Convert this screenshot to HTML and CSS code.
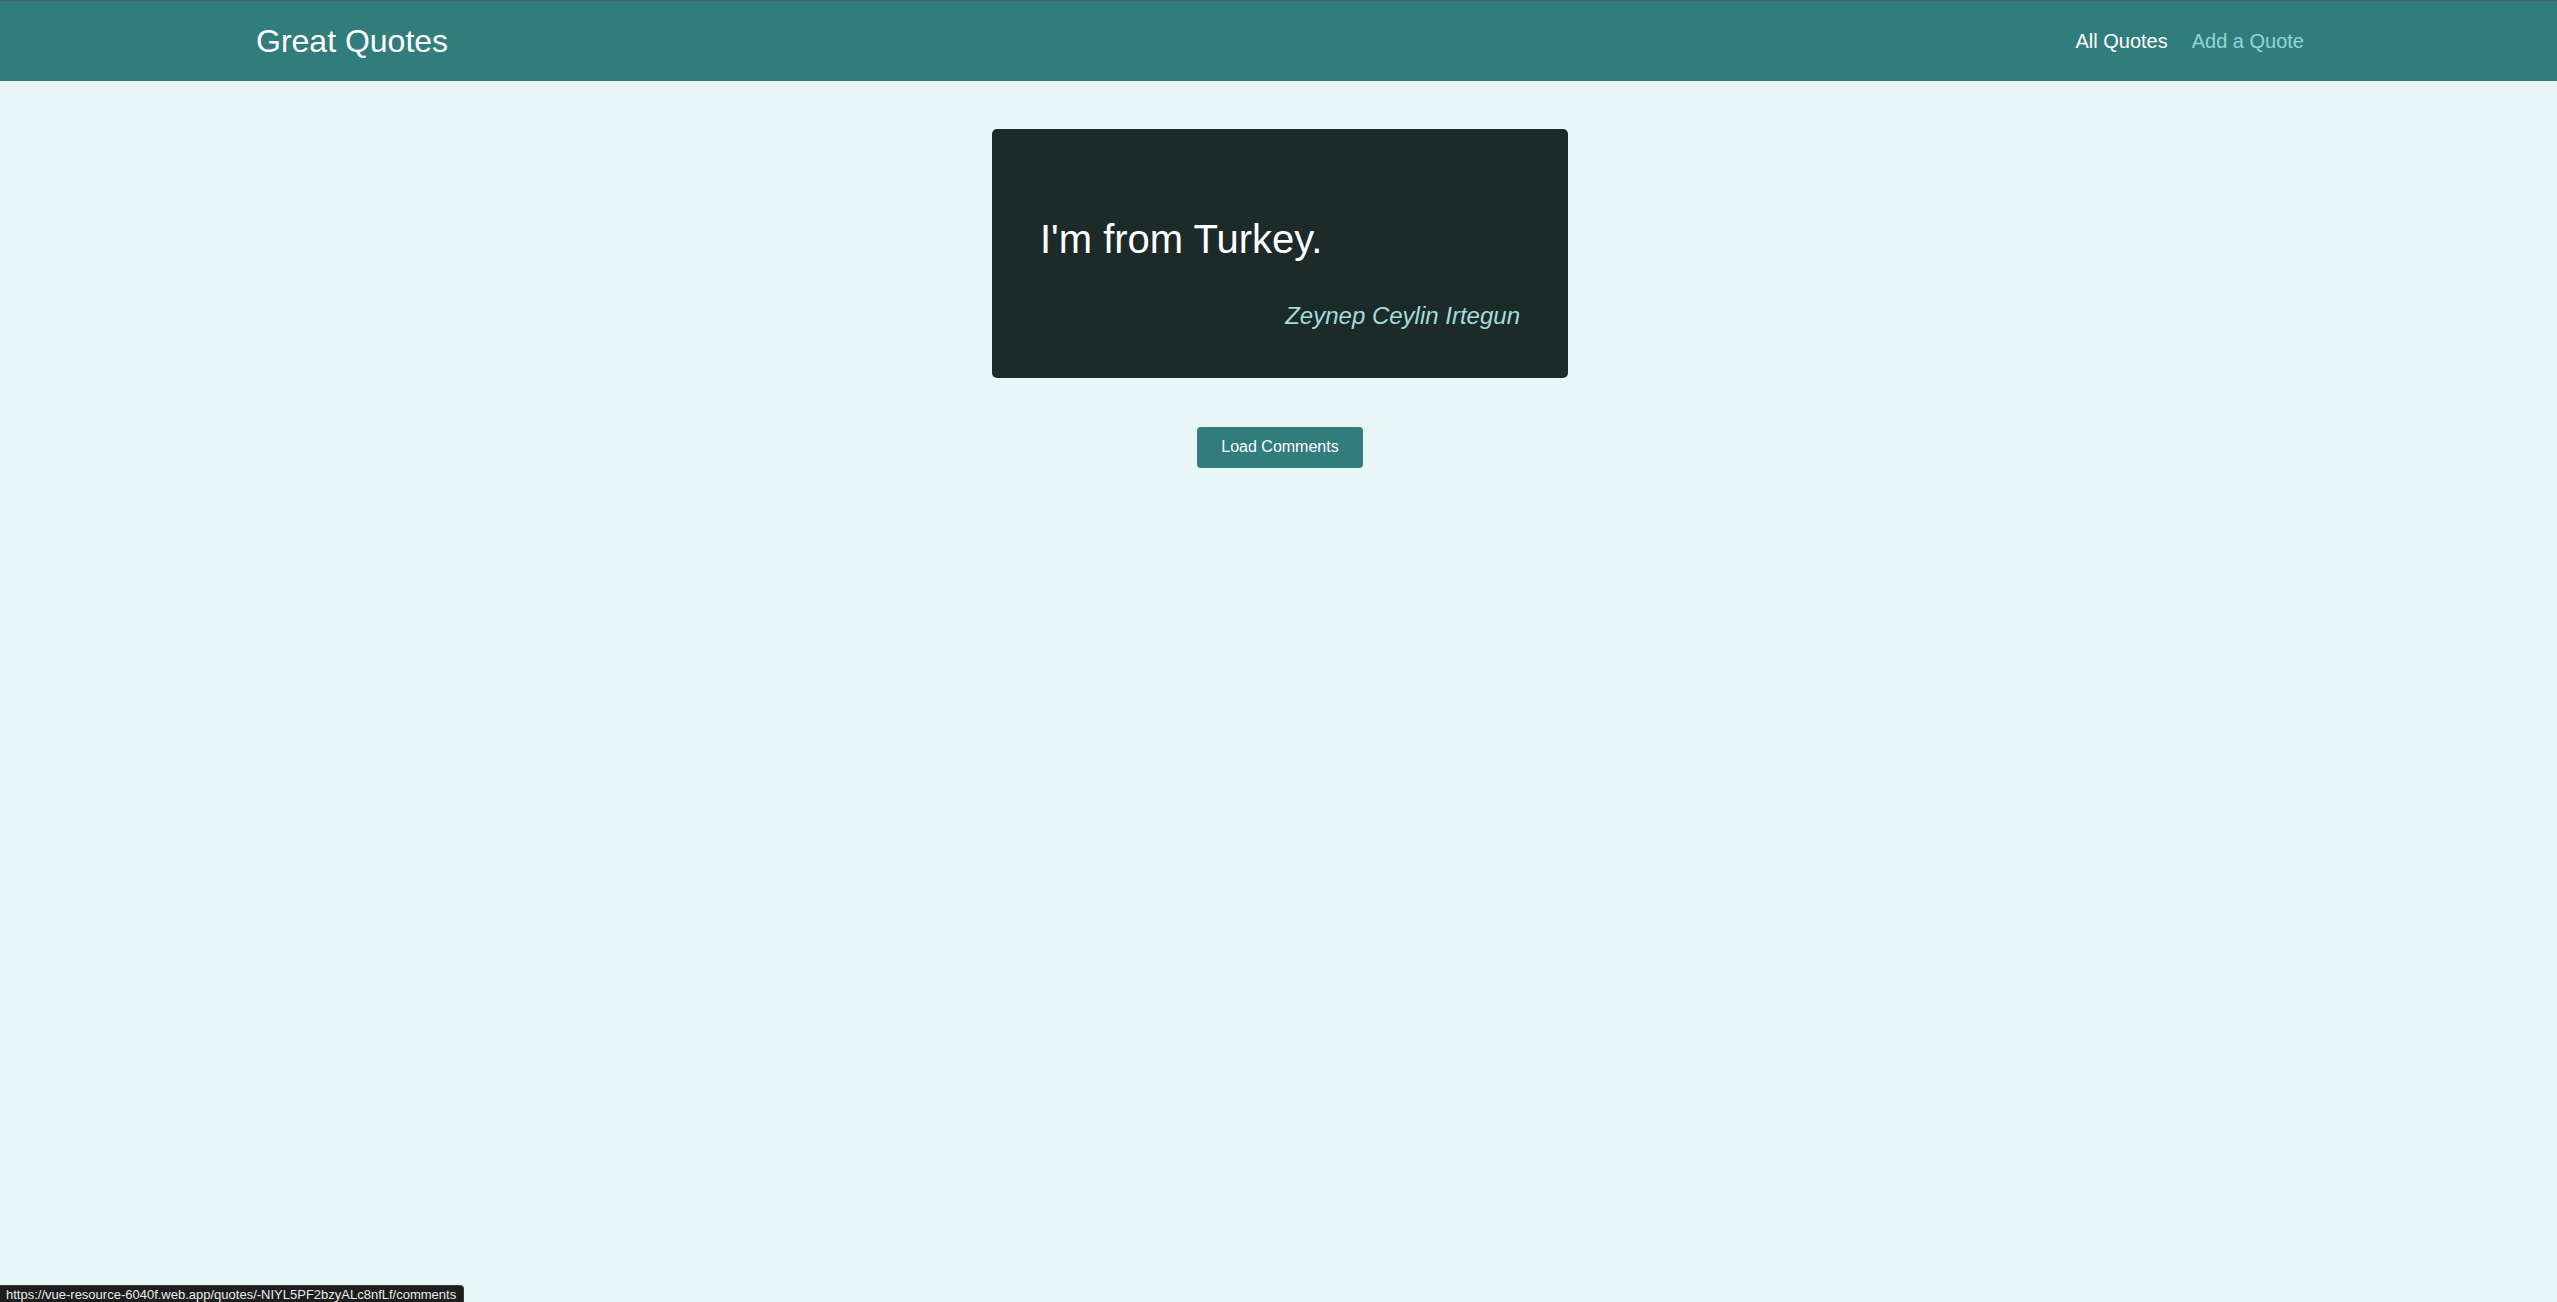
FILE: index.html
```html
<!DOCTYPE html>
<html lang="en">
<head>
<meta charset="utf-8">
<title>Great Quotes</title>
<link rel="stylesheet" href="styles.css">
</head>
<body>
<header class="header">
  <div class="header-inner">
    <div class="logo">Great Quotes</div>
    <nav class="nav">
      <a class="nav-link nav-link-active" href="#">All Quotes</a>
      <a class="nav-link" href="#">Add a Quote</a>
    </nav>
  </div>
</header>
<main class="main">
  <figure class="quote">
    <p class="quote-text">I'm from Turkey.</p>
    <figcaption class="quote-author">Zeynep Ceylin Irtegun</figcaption>
  </figure>
  <div class="actions">
    <a class="btn" href="#">Load Comments</a>
  </div>
</main>
<div class="status-bar">https://vue-resource-6040f.web.app/quotes/-NIYL5PF2bzyALc8nfLf/comments</div>
</body>
</html>
```
FILE: styles.css
```css
html {
  overflow: hidden;
  background: #e8f6f7;
}
body {
  margin: 0;
  padding: 0;
  width: 2560px;
  background: #e8f6f7;
  font-family: "Liberation Sans", Arial, Helvetica, sans-serif;
}
.header {
  background: #317d7e;
  border-top: 1px solid #5a5a5a;
  height: 80px;
}
.header-inner {
  width: 80%;
  height: 100%;
  margin: 0 auto;
  display: flex;
  align-items: center;
  justify-content: space-between;
}
.logo {
  color: #ffffff;
  font-size: 32px;
}
.nav {
  display: flex;
  gap: 24px;
}
.nav-link {
  font-size: 20px;
  color: #95d5d5;
  text-decoration: none;
}
.nav-link-active {
  color: #ffffff;
}
.main {
  display: block;
}
.quote {
  box-sizing: border-box;
  width: 576px;
  margin: 48px auto;
  padding: 48px;
  background: #1c2a2a;
  border-radius: 5px;
  color: #ffffff;
}
.quote-text {
  font-size: 40px;
  margin: 40px 0;
}
.quote-author {
  margin: 0;
  font-size: 24px;
  font-style: italic;
  text-align: right;
  color: #a3dcdc;
}
.actions {
  margin-top: 49px;
  text-align: center;
}
.btn {
  display: inline-block;
  padding: 11px 24px 12px;
  background: #317d7e;
  color: #ffffff;
  font-size: 16px;
  text-decoration: none;
  border-radius: 4px;
}
.status-bar {
  position: fixed;
  left: 0;
  bottom: 0;
  padding: 1px 7px 0 6px;
  background: #1e1e1e;
  color: #ececec;
  font-size: 13px;
  border: 1px solid #3c3c3c;
  border-left: none;
  border-bottom: none;
  border-top-right-radius: 4px;
}
```
